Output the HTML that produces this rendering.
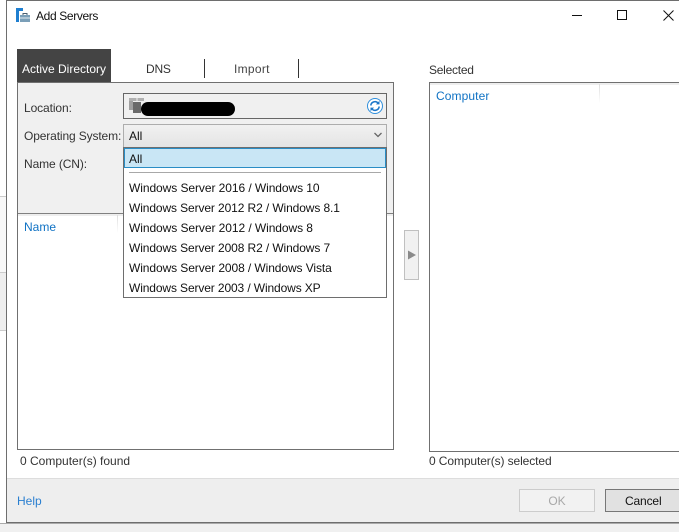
<!DOCTYPE html>
<html><head><meta charset="utf-8">
<style>
html,body{margin:0;padding:0;background:#fff}
#r{position:relative;width:679px;height:532px;overflow:hidden;background:#fff;font-family:"Liberation Sans",sans-serif;font-size:12px;color:#222}
#r div,#r span{position:absolute;box-sizing:border-box}
.t{white-space:nowrap;line-height:16px;height:16px}
.b{color:#0f72c4}
.o{letter-spacing:-.11px}
</style></head><body>
<div id="r">
<!-- background left of window -->
<div style="left:0;top:0;width:6px;height:196px;background:#fff"></div>
<div style="left:0;top:196px;width:6px;height:76px;background:#f8f8f8;border-top:1px solid #ccc"></div>
<div style="left:0;top:272px;width:6px;height:58px;background:#eee;border-top:1px solid #ccc"></div>
<div style="left:0;top:330px;width:6px;height:202px;background:#fff;border-top:1px solid #ccc"></div>
<!-- window -->
<div style="left:6px;top:0;width:673px;height:523px;background:#fff;border:solid #6e6e6e;border-width:1px 0 1px 1px"></div>
<div style="left:0;top:523px;width:679px;height:9px;background:#f0f0f0;border-top:1px solid #aaa"></div>
<!-- title -->
<svg style="position:absolute;left:15px;top:7px" width="16" height="16" viewBox="0 0 16 16"><path d="M1 1h7v3H1z" fill="#1f7fd0"/><path d="M1 4h3v11H1z" fill="#1f7fd0"/><path d="M5 8h10v7H5z" fill="#7b9fb8"/><path d="M7.500 6h5v2h-1V7h-3v1h-1z" fill="#4a5f70"/><path d="M5 10.500h10v1H5z" fill="#e6edf2"/></svg>
<div class="t" style="left:36px;top:8px;font-size:12px;color:#111;letter-spacing:-.36px">Add Servers</div>
<svg style="position:absolute;left:565px;top:5px" width="114" height="22" viewBox="0 0 114 22"><path d="M7 10.500h10" stroke="#111" fill="none"/><path d="M52.500 5.500h9v9h-9z" stroke="#111" fill="none"/><path d="M98.500 5.500l10 10m0-10l-10 10" stroke="#111" fill="none"/></svg>
<!-- tabs -->
<div style="left:17px;top:49px;width:94px;height:33px;background:#444"></div>
<div class="t" style="left:22px;top:61px;color:#fff;font-size:12px">Active Directory</div>
<div class="t" style="left:146px;top:61px;color:#333;letter-spacing:-.2px">DNS</div>
<div style="left:204px;top:59px;width:1px;height:19px;background:#333"></div>
<div class="t" style="left:234px;top:61px;color:#444;letter-spacing:.3px">Import</div>
<div style="left:298px;top:59px;width:1px;height:19px;background:#333"></div>
<!-- left panel -->
<div style="left:17px;top:82px;width:377px;height:368px;background:#fff;border:1px solid #707070"></div>
<div style="left:18px;top:83px;width:375px;height:130px;background:#f0f0f0"></div>
<div style="left:18px;top:213px;width:375px;height:1px;background:#808080"></div>
<div style="left:18px;top:214px;width:375px;height:2px;background:#eee"></div>
<div class="t" style="left:24px;top:100px;color:#333;letter-spacing:-.1px">Location:</div>
<div class="t" style="left:24px;top:128px;color:#333;letter-spacing:-.13px">Operating System:</div>
<div class="t" style="left:24px;top:156px;color:#333;letter-spacing:-.1px">Name (CN):</div>
<div style="left:123px;top:93px;width:264px;height:26px;background:#f0f0f0;border:1px solid #666"></div>
<svg style="position:absolute;left:128px;top:97px" width="17" height="17" viewBox="0 0 17 17"><path d="M1 1h15v3H1z" fill="#b0b0b0"/><path d="M1 4h4v9H1z" fill="#a0a0a0"/><path d="M5 5h8v11H5z" fill="#6a6a6a"/><path d="M8.500 1h1v4h-1z" fill="#eee"/></svg>
<div style="left:141px;top:102px;width:94px;height:14px;background:#000;border-radius:7px"></div>
<svg style="position:absolute;left:366px;top:97px" width="18" height="18" viewBox="0 0 18 18"><circle cx="9" cy="9" r="7.500" fill="#fff" stroke="#2f8fdc"/><path d="M4.800 8.500a4.200 4.200 0 0 1 7.400-2.300M13.200 9.500a4.200 4.200 0 0 1-7.400 2.300" fill="none" stroke="#1b76c9" stroke-width="1.500"/><path d="M13.500 3.800v3.600h-3.600zM4.500 14.200v-3.600h3.600z" fill="#1b76c9"/></svg>
<div style="left:123px;top:124px;width:264px;height:24px;background:linear-gradient(#f1f1f1,#e4e4e4);border:1px solid #adadad"></div>
<div class="t" style="left:129px;top:128px;color:#111">All</div>
<svg style="position:absolute;left:373px;top:131px" width="10" height="8" viewBox="0 0 10 8"><path d="M1.500 2l3.500 3.500L8.500 2" fill="none" stroke="#666" stroke-width="1.300"/></svg>
<!-- dropdown -->
<div style="left:123px;top:147px;width:264px;height:151px;background:#fff;border:1px solid #6e6e6e"></div>
<div style="left:124px;top:148px;width:262px;height:20px;background:#c9e6f5;border:1px solid #2a8dc5"></div>
<div class="t" style="left:129px;top:151px;color:#111">All</div>
<div style="left:129px;top:172px;width:252px;height:1px;background:#a8a8a8"></div>
<div class="t o" style="left:129px;top:180px;color:#111;letter-spacing:-.07px">Windows Server 2016 / Windows 10</div>
<div class="t o" style="left:129px;top:200px;color:#111">Windows Server 2012 R2 / Windows 8.1</div>
<div class="t o" style="left:129px;top:220px;color:#111;letter-spacing:-.07px">Windows Server 2012 / Windows 8</div>
<div class="t o" style="left:129px;top:240px;color:#111">Windows Server 2008 R2 / Windows 7</div>
<div class="t o" style="left:129px;top:260px;color:#111;letter-spacing:-.09px">Windows Server 2008 / Windows Vista</div>
<div class="t o" style="left:129px;top:280px;color:#111;letter-spacing:-.12px">Windows Server 2003 / Windows XP</div>
<!-- name col -->
<div class="t b" style="left:24px;top:219px">Name</div>
<div style="left:117px;top:215px;width:1px;height:18px;background:linear-gradient(#ddd,#fff)"></div>
<div class="t" style="left:20px;top:453px;color:#333">0 Computer(s) found</div>
<!-- arrow -->
<div style="left:404px;top:230px;width:15px;height:50px;background:#f1f1f1;border:1px solid #c0c0c0"></div>
<svg style="position:absolute;left:407px;top:250px" width="10" height="10" viewBox="0 0 10 10"><path d="M1 0.500l8 4.500-8 4.500z" fill="#8a8a8a"/></svg>
<!-- right panel -->
<div class="t" style="left:429px;top:62px;color:#333;letter-spacing:-.25px">Selected</div>
<div style="left:429px;top:82px;width:260px;height:370px;background:#fff;border:1px solid #707070"></div>
<div style="left:430px;top:83px;width:249px;height:2px;background:#eee"></div>
<div class="t b" style="left:436px;top:88px;letter-spacing:.1px">Computer</div>
<div style="left:599px;top:84px;width:1px;height:19px;background:linear-gradient(#ddd,#fff)"></div>
<div class="t" style="left:429px;top:453px;color:#333;letter-spacing:-.1px">0 Computer(s) selected</div>
<!-- footer -->
<div style="left:7px;top:478px;width:672px;height:44px;background:#eee;border-top:1px solid #ddd"></div>
<div class="t b" style="left:17px;top:493px;color:#2a7fd0">Help</div>
<div style="left:519px;top:489px;width:76px;height:23px;background:#f2f2f2;border:1px solid #ccc"></div>
<div class="t" style="left:519px;top:493px;width:76px;text-align:center;color:#a8a8a8">OK</div>
<div style="left:605px;top:489px;width:84px;height:23px;background:#e1e1e1;border:1px solid #777"></div>
<div class="t" style="left:625px;top:493px;color:#111;letter-spacing:-.15px">Cancel</div>
</div>
</body></html>
